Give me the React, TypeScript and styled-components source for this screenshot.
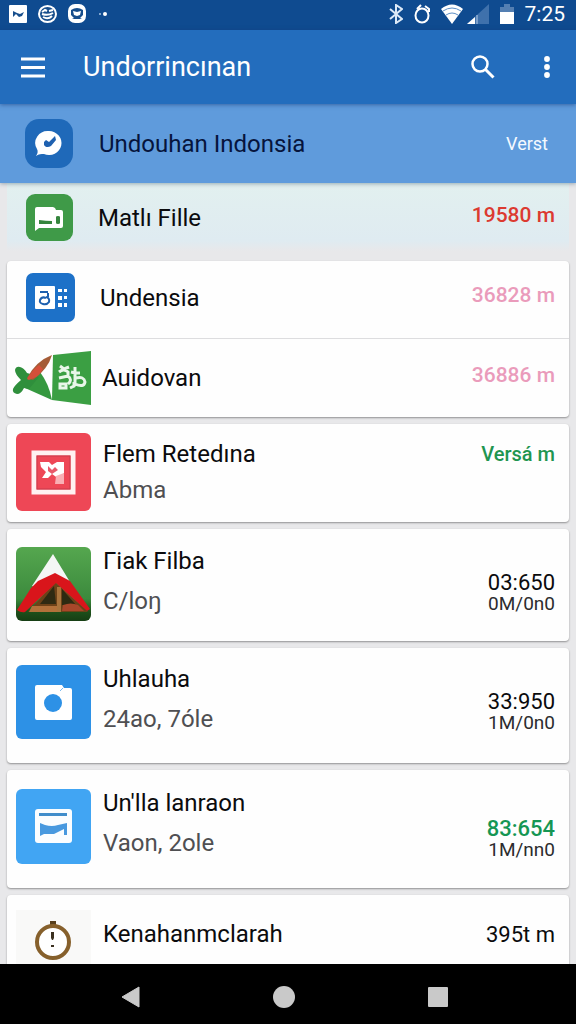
import React from 'react';
import styled, { createGlobalStyle } from 'styled-components';

const GlobalStyle = createGlobalStyle`
  * { box-sizing: border-box; }
  html, body { margin: 0; padding: 0; }
  body { font-family: Roboto, "Noto Sans", sans-serif; background: #e8e8ea; color: #0b0b0d; }
  button { border: 0; padding: 0; background: none; color: inherit; font: inherit; cursor: pointer; }
  ul { list-style: none; margin: 0; padding: 0; }
  svg { display: block; flex: none; }
`;

const Screen = styled.div`
  display: flex;
  flex-direction: column;
  height: 100vh;
  overflow: hidden;
`;

const StatusBar = styled.div`
  display: flex;
  justify-content: space-between;
  align-items: center;
  flex: none;
  height: 30px;
  padding: 0 11px 3px 9px;
  background: #0f4b90;
  color: #fff;
`;

const StatusGroup = styled.div<{ $gap: number }>`
  display: flex;
  align-items: center;
  gap: ${(p) => p.$gap}px;
`;

const Clock = styled.time`
  font-size: 21px;
  line-height: 24px;
`;

const AppBar = styled.header`
  display: flex;
  align-items: center;
  flex: none;
  height: 74px;
  padding: 0 14px 0 18px;
  background: #236dbd;
  color: #fff;
  box-shadow: 0 1px 4px rgba(20, 50, 110, 0.5);
  z-index: 1;
`;

const Title = styled.h1`
  flex: 1;
  margin: 0 0 0 35px;
  font-size: 27px;
  line-height: 32px;
  font-weight: 400;
`;

const BarButton = styled.button`
  display: flex;
  align-items: center;
  justify-content: center;
  width: 30px;
  height: 48px;
`;

const BarActions = styled.div`
  display: flex;
  gap: 34px;
`;

const Content = styled.main`
  flex: 1;
  min-height: 0;
  overflow: hidden;
`;

const Row = styled.li<{ $pad: string; $gap?: number }>`
  display: flex;
  align-items: center;
  gap: ${(p) => p.$gap ?? 12}px;
  padding: ${(p) => p.$pad};

  & + & {
    border-top: 1px solid #dddddf;
  }
`;

const SelectedRow = styled.div`
  display: flex;
  align-items: center;
  gap: 26px;
  height: 79px;
  padding: 0 28px 0 25px;
  background: #5f9bdc;
  color: #06143c;
  box-shadow: 0 1px 4px rgba(60, 90, 110, 0.45);
  position: relative;
`;

const TintedRow = styled.div`
  display: flex;
  align-items: center;
  gap: 25px;
  margin: 0 7px 10px;
  padding: 11px 14px 10px 19px;
  background: linear-gradient(#e2f0ef, #dfebf1 85%, #e8e8ea);
`;

const Cards = styled.div`
  display: flex;
  flex-direction: column;
  gap: 7px;
  padding: 0 7px;
`;

const Card = styled.ul`
  border-radius: 4px;
  background: #fefefe;
  box-shadow: 0 1px 2px rgba(0, 0, 0, 0.38);
`;

const Texts = styled.div<{ $raised?: boolean; $top?: boolean }>`
  flex: 1;
  min-width: 0;
  padding-bottom: ${(p) => (p.$raised ? 6 : 0)}px;
  align-self: ${(p) => (p.$top ? 'flex-start' : 'auto')};
`;

const Name = styled.div<{ $line?: number }>`
  font-size: 24px;
  line-height: ${(p) => p.$line ?? 40}px;
  white-space: nowrap;
`;

const Detail = styled(Name)`
  color: #4f4f52;
`;

const Values = styled.div<{ $drop?: number; $top?: boolean }>`
  display: flex;
  flex-direction: column;
  align-items: flex-end;
  padding-top: ${(p) => p.$drop ?? 0}px;
  align-self: ${(p) => (p.$top ? 'flex-start' : 'auto')};
`;

const Value = styled.span<{ $color?: string; $strong?: boolean; $raised?: boolean; $size?: number }>`
  font-size: ${(p) => p.$size ?? 22}px;
  line-height: 22px;
  font-weight: ${(p) => (p.$strong ? 500 : 400)};
  color: ${(p) => p.$color ?? 'inherit'};
  padding-bottom: ${(p) => (p.$raised ? 6 : 0)}px;
`;

const SmallValue = styled.span`
  font-size: 19px;
  line-height: 20px;
  color: #2c2c2e;
`;

const NavBar = styled.nav`
  display: flex;
  align-items: center;
  justify-content: center;
  gap: 106px;
  flex: none;
  height: 60px;
  padding: 5px 8px 0 0;
  background: #000;
  z-index: 1;
`;

const NavButton = styled.button`
  display: flex;
  align-items: center;
  justify-content: center;
  width: 48px;
  height: 48px;
`;

const ChatIcon = () => (
  <svg width="48" height="49" viewBox="0 0 48 49">
    <rect width="48" height="49" rx="14" fill="#1f69b9" />
    <path d="M24 12a12.500 12 0 1 1-5 23c-3 0-5 0-8 2 2-3 2-5 1-7A12.500 12 0 0 1 24 12z" fill="#fff" />
    <path d="M19 23l2-2 3 2 6-6 1 4-5 6c-3 2-6 1-7-1z" fill="#1f61b0" />
  </svg>
);

const TruckIcon = () => (
  <svg width="47" height="47" viewBox="0 0 47 47">
    <rect width="47" height="47" rx="9" fill="#3f9a48" />
    <path d="M11 13q-2 0-2 2v22l4-3h22q2 0 2-2V18q0-2-2-2h-5l-1-2-2-1z" fill="#fff" />
    <path d="M13 26q7 1 13 1v3H13zM30 23q0-1 2-1t2 1v6q0 1-2 1t-2-1z" fill="#35853d" />
  </svg>
);

const ContactIcon = () => (
  <svg width="49" height="49" viewBox="0 0 49 49">
    <rect width="49" height="49" rx="7" fill="#1d71c8" />
    <rect x="9" y="13" width="20" height="23" rx="1" fill="#fff" />
    <path d="M14 19h8M20 24q4 1 3 5-2 3-6 2-4-1-3-4 2-4 6-2M22 20v4" fill="none" stroke="#1d5fae" strokeWidth="2" />
    <path d="M32 16h4v3h-4zM38 16h3v3h-3zM32 23h4v4h-4zM38 23h3v3h-3zM32 30h4v4h-4zM38 30h3v4h-3z" fill="#fff" />
  </svg>
);

const SheetIcon = () => (
  <svg width="80" height="54" viewBox="0 0 80 54">
    <path d="M41 4L79 0v54l-39-5z" fill="#3b9f43" />
    <path d="M13 37L28 21q9 12 12 28z" fill="#35983f" />
    <path d="M3 19q1-4 5-3 4 1 7 6l7 2 5 2-10 12-5-1q-3 6-7 6-5-1-4-5 1-3 8-9-6-6-6-10z" fill="#2f8f3c" />
    <path d="M40 4Q24 10 15 27l6 2Q36 18 40 4z" fill="#a55c37" />
    <path d="M15 28q5-9 12-14l4 4q-4 7-9 9l-5 2z" fill="#d5503a" />
    <path d="M47 21q5-4 9 0v4l-9 2m9-2q5 4 0 8m-8 0h6v4h-6zM48 15l4 3 5-2M63 16v17q9 4 10-2-1-6-9-4m-5-6l4 1 5 0M58 37l4-2v-4" fill="none" stroke="#e9f6e9" strokeWidth="3" />
  </svg>
);

const FrameIcon = () => (
  <svg width="75" height="78" viewBox="0 0 75 78">
    <rect width="75" height="78" rx="6" fill="#ee4756" />
    <rect x="18" y="20" width="39" height="39" fill="none" stroke="#fff1f1" strokeWidth="5" />
    <rect x="21" y="23" width="33" height="33" fill="none" stroke="#c93b4b" strokeWidth="1" />
    <path d="M24 29h9l3 3 5-3h7v11l-5 6-7-5-4 4h-6l4-6-5-5z" fill="#fff" />
    <path d="M32 33l4 4 3-3 3 3-6 4-4-3z" fill="#e8596a" />
    <path d="M40 43l8-3v11h-9z" fill="#f9b0b5" />
  </svg>
);

const TentIcon = () => (
  <svg width="75" height="74" viewBox="0 0 75 74">
    <defs>
      <linearGradient id="grass" x1="0" y1="0" x2="0" y2="1">
        <stop offset="0" stopColor="#55a74f" />
        <stop offset="0.700" stopColor="#3c8a3d" />
        <stop offset="0.880" stopColor="#1d4f1a" />
        <stop offset="1" stopColor="#163e14" />
      </linearGradient>
    </defs>
    <rect width="75" height="74" rx="6" fill="url(#grass)" />
    <path d="M37 7L16 39l4 2 19-12 15 6z" fill="#f4f6f5" />
    <path d="M39 35L12 65h60z" fill="#6d4218" />
    <path d="M38 39L24 57h16z" fill="#2f2a12" />
    <path d="M16 59h26v6H13z" fill="#b2713a" />
    <path d="M41 40h4v25h-4z" fill="#a9743c" />
    <path d="M46 42l14 16H46z" fill="#2d2a11" />
    <path d="M47 58q8-3 15 0l6 6H46z" fill="#a8472a" />
    <path d="M39 26L22 34 15 41 1 63q4 3 8 2l31-29 31 28 3-2L54 34z" fill="#d9151b" />
  </svg>
);

const CameraIcon = () => (
  <svg width="75" height="74" viewBox="0 0 75 74">
    <rect width="75" height="74" rx="6" fill="#2d91e6" />
    <path d="M21 20h25l2 3h6q2 0 2 2v28q0 2-2 2H21q-2 0-2-2V22q0-2 2-2z" fill="#fff" />
    <path d="M44 26l3-3" stroke="#7dbbee" strokeWidth="1" />
    <circle cx="37" cy="38" r="9" fill="#2d91e6" />
  </svg>
);

const WindowIcon = () => (
  <svg width="75" height="75" viewBox="0 0 75 75">
    <rect width="75" height="75" rx="6" fill="#41a5f3" />
    <rect x="19" y="20" width="37" height="34" rx="3" fill="#fafdff" />
    <rect x="23" y="24" width="28" height="3" fill="#408dcb" />
    <path d="M24 34l5 2q7 2 13 0l9-2v12h-3v-6l-10 5H28l-4 2z" fill="#4899df" />
  </svg>
);

const WatchIcon = () => (
  <svg width="75" height="75" viewBox="0 0 75 75">
    <rect width="75" height="75" fill="#f9f9f8" />
    <rect x="34" y="11" width="6" height="5" fill="#59401d" />
    <circle cx="37" cy="32" r="16" fill="#fff" stroke="#86602c" strokeWidth="4" />
    <path d="M35 22h3v6l-1 2h-1l-1-2zM35 35h3v2h-3z" fill="#3b3020" />
  </svg>
);

const entries = [
  {
    pad: '12px 14px 14px 9px', icon: <TentIcon />, name: 'Γiak Filba', detail: 'C/loŋ',
    value: '03:650', small: '0M/0n0', drop: 18, color: undefined,
  },
  {
    pad: '11px 14px 18px 9px', icon: <CameraIcon />, name: 'Uhlauha', detail: '24ao, 7óle',
    value: '33:950', small: '1M/0n0', drop: 20, color: undefined,
  },
  {
    pad: '13px 14px 19px 9px', icon: <WindowIcon />, name: "Un'lla lanraon", detail: 'Vaon, 2ole',
    value: '83:654', small: '1M/nn0', drop: 26, color: '#159653',
  },
];

export default function App() {
  return (
    <Screen>
      <GlobalStyle />
      <StatusBar>
        <StatusGroup $gap={11}>
          <svg width="18" height="18" viewBox="0 0 18 18">
            <rect width="18" height="18" rx="1" fill="#fff" />
            <path d="M4 12V6l4 2 3 1 4-2-2 4-3 1-3-3z" fill="#174e8c" />
          </svg>
          <svg width="19" height="18" viewBox="0 0 19 18">
            <ellipse cx="9.500" cy="9" rx="8.500" ry="8" fill="#174e8c" stroke="#fff" strokeWidth="2" />
            <path d="M4 7l3-2 2 1M11 6l4-1M4 9q6 2 11-1M5 12q5 3 9-1" fill="none" stroke="#fff" strokeWidth="2" />
          </svg>
          <svg width="18" height="19" viewBox="0 0 18 19">
            <rect x="1" y="1" width="16" height="17" rx="6" fill="#fff" stroke="#fff" strokeWidth="2" />
            <path d="M3 6q6-4 12 0v5l-3 3 2 1H4l2-1-3-3z" fill="#174e8c" />
            <path d="M5 7l4 1 4-1-1 4-3 1-3-1z" fill="#fff" />
          </svg>
          <svg width="12" height="6" viewBox="0 0 12 6">
            <circle cx="3" cy="3" r="1" fill="#a8c4e4" />
            <circle cx="8" cy="3" r="2" fill="#fff" />
          </svg>
        </StatusGroup>
        <StatusGroup $gap={10}>
          <svg width="14" height="20" viewBox="0 0 14 20">
            <path d="M1 5l12 10-6 4V1l6 4L1 15" fill="none" stroke="#dce9f7" strokeWidth="2" />
          </svg>
          <svg width="18" height="20" viewBox="0 0 18 20">
            <ellipse cx="9" cy="11.500" rx="6.500" ry="7" fill="none" stroke="#fff" strokeWidth="2" />
            <path d="M4 5l4-4M12 2l4 3v3" fill="none" stroke="#fff" strokeWidth="2" />
          </svg>
          <StatusGroup $gap={4}>
            <svg width="22" height="20" viewBox="0 0 22 20">
              <path d="M0 5q11-9 22 0L11 20z" fill="#fff" />
              <path d="M2 7q9-6 18 0M5 11q6-4 12 0" fill="none" stroke="#5e8fc6" strokeWidth="1" />
            </svg>
            <svg width="22" height="20" viewBox="0 0 22 20">
              <path d="M22 0v20H0z" fill="#3f71ac" />
              <path d="M8 13v7H0z" fill="#fff" />
              <path d="M10 11v9" stroke="#b8cfe9" strokeWidth="1" />
            </svg>
          </StatusGroup>
          <svg width="16" height="20" viewBox="3 0 16 20">
            <path d="M8 0h6v3h4v7H4V3h4z" fill="#547fb2" />
            <path d="M4 8h14v12H4z" fill="#fff" />
          </svg>
          <Clock>7:25</Clock>
        </StatusGroup>
      </StatusBar>

      <AppBar>
        <BarButton aria-label="Menu">
          <svg width="24" height="21" viewBox="0 0 24 21">
            <path d="M0 2h24M0 10.500h24M0 19h24" stroke="#fff" strokeWidth="3" />
          </svg>
        </BarButton>
        <Title>Undorrincınan</Title>
        <BarActions>
          <BarButton aria-label="Search">
            <svg width="24" height="24" viewBox="0 0 24 24" fill="none" stroke="#fff">
              <circle cx="9" cy="9" r="7.500" strokeWidth="2.500" />
              <path d="M14.500 14.500l8 8" strokeWidth="3" />
            </svg>
          </BarButton>
          <BarButton aria-label="More options">
            <svg width="6" height="22" viewBox="0 0 6 22" fill="#fff">
              <circle cx="3" cy="3" r="2.900" />
              <circle cx="3" cy="11" r="2.900" />
              <circle cx="3" cy="19" r="2.900" />
            </svg>
          </BarButton>
        </BarActions>
      </AppBar>

      <Content>
        <SelectedRow>
          <ChatIcon />
          <Texts>
            <Name>Undouhan Indonsia</Name>
          </Texts>
          <Value $color="#f4f9ff" $size={18}>Verst</Value>
        </SelectedRow>
        <TintedRow>
          <TruckIcon />
          <Texts>
            <Name>Matlı Fille</Name>
          </Texts>
          <Value $color="#dc3a30" $strong $raised $size={21}>19580 m</Value>
        </TintedRow>

        <Cards>
          <Card>
            <Row $pad="12px 14px 16px 19px" $gap={25}>
              <ContactIcon />
              <Texts>
                <Name>Undensia</Name>
              </Texts>
              <Value $color="#ea9bbb" $strong $raised $size={21}>36828 m</Value>
            </Row>
            <Row $pad="12px 14px 12px 5px" $gap={10}>
              <SheetIcon />
              <Texts>
                <Name>Auidovan</Name>
              </Texts>
              <Value $color="#ea9bbb" $strong $raised $size={21}>36886 m</Value>
            </Row>
          </Card>

          <Card>
            <Row $pad="9px 14px 11px 9px">
              <FrameIcon />
              <Texts>
                <Name $line={36}>Flem Retedına</Name>
                <Detail $line={36}>Abma</Detail>
              </Texts>
              <Values $top $drop={10}>
                <Value $color="#1f9550" $strong $size={20}>Versá m</Value>
              </Values>
            </Row>
          </Card>

          {entries.map((e) => (
            <Card key={e.name}>
              <Row $pad={e.pad}>
                {e.icon}
                <Texts $raised>
                  <Name>{e.name}</Name>
                  <Detail>{e.detail}</Detail>
                </Texts>
                <Values $drop={e.drop}>
                  <Value $color={e.color} $strong={!!e.color}>{e.value}</Value>
                  <SmallValue>{e.small}</SmallValue>
                </Values>
              </Row>
            </Card>
          ))}

          <Card>
            <Row $pad="15px 14px 20px 9px">
              <WatchIcon />
              <Texts $top>
                <Name $line={48}>Kenahanmclarah</Name>
              </Texts>
              <Values $top $drop={14}>
                <Value>395t m</Value>
              </Values>
            </Row>
          </Card>
        </Cards>
      </Content>

      <NavBar>
        <NavButton aria-label="Back">
          <svg width="19" height="22" viewBox="0 0 19 22">
            <path d="M18 1v20L1 11z" fill="#c9c9c9" stroke="#c9c9c9" strokeLinejoin="round" />
          </svg>
        </NavButton>
        <NavButton aria-label="Home">
          <svg width="22" height="22" viewBox="0 0 22 22">
            <circle cx="11" cy="11" r="11" fill="#c9c9c9" />
          </svg>
        </NavButton>
        <NavButton aria-label="Recent apps">
          <svg width="20" height="20" viewBox="0 0 20 20">
            <rect width="20" height="20" rx="1" fill="#c9c9c9" />
          </svg>
        </NavButton>
      </NavBar>
    </Screen>
  );
}
